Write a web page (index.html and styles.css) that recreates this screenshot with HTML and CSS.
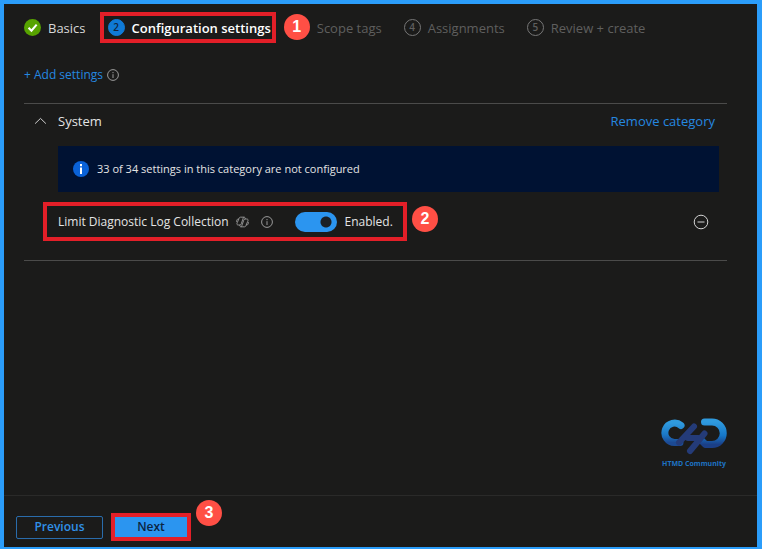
FILE: index.html
```html
<!DOCTYPE html>
<html lang="en">
<head>
<meta charset="utf-8">
<meta name="viewport" content="width=device-width, initial-scale=1">
<title>Create profile - Configuration settings</title>
<link rel="stylesheet" href="styles.css">
</head>
<body>
<div class="blade">
  <ol class="steps">
    <li class="step step-done">
      <svg class="step-icon" viewBox="0 0 18 18" aria-hidden="true"><circle cx="9" cy="9" r="9" fill="#57a300"/><path d="M4.8 9.2 7.9 12.3 13.4 5.9" fill="none" stroke="#fff" stroke-width="2.2"/></svg>
      <span>Basics</span>
    </li>
    <li class="step step-current highlight">
      <span class="step-icon step-number">2</span>
      <span>Configuration settings</span>
    </li>
    <li class="step">
      <span class="step-icon"></span>
      <span>Scope tags</span>
      <b class="callout callout-step">1</b>
    </li>
    <li class="step">
      <span class="step-icon step-number">4</span>
      <span>Assignments</span>
    </li>
    <li class="step">
      <span class="step-icon step-number">5</span>
      <span>Review + create</span>
    </li>
  </ol>

  <main class="content">
    <div class="toolbar">
      <a class="link" href="#">+ Add settings</a>
      <svg class="info-icon" viewBox="0 0 12 12" aria-hidden="true"><circle cx="6" cy="6" r="5.4"/><path d="M6 5.2V9M6 3v1.2"/></svg>
    </div>

    <section class="category">
      <header class="category-header">
        <button class="collapse" type="button" aria-expanded="true" aria-label="Collapse System">
          <svg viewBox="0 0 12 8" aria-hidden="true"><path d="M.6 6.6 6 1.4l5.4 5.2"/></svg>
        </button>
        <h2 class="category-title">System</h2>
        <a class="link" href="#">Remove category</a>
      </header>

      <div class="notice">
        <svg class="notice-icon" viewBox="0 0 16 16" aria-hidden="true"><circle cx="8" cy="8" r="8" fill="#0a62d8"/><path d="M7 6.6h2V13H7zM7 3h2v2.2H7z" fill="#fff"/></svg>
        <p>33 of 34 settings in this category are not configured</p>
      </div>

      <div class="setting-row">
        <div class="setting highlight">
          <label for="limit-log">Limit Diagnostic Log Collection</label>
          <svg class="copilot-icon" viewBox="0 0 14 12" aria-hidden="true"><path d="M4.800.8h3.700c1 0 1.300.6 1.600 2M4.800.8c-1 0-1.400.8-1.700 1.800L1.300 6.800C.6 8.600 1.200 9.200 2.500 9.200h1.800c.8 0 1.100-.5 1.400-1.300l1.700-5C7.800 1.600 8 .8 8.800.8M3.100 2.800h-.6C1.200 2.800.6 4 .6 5.800M9.200 11.200H5.500c-1 0-1.300-.6-1.600-2M9.200 11.200c1 0 1.400-.8 1.700-1.800l1.800-4.200c.7-1.800.1-2.400-1.200-2.400H9.700c-.8 0-1.100.5-1.400 1.300l-1.700 5c-.4 1.300-.6 2.100-1.400 2.100M10.900 9.200h.6c1.300 0 1.900-1.200 1.900-3"/></svg>
          <svg class="info-icon" viewBox="0 0 12 12" aria-hidden="true"><circle cx="6" cy="6" r="5.400"/><path d="M6 5.200V9M6 3v1.200"/></svg>
          <input class="toggle" id="limit-log" type="checkbox" role="switch" checked>
          <span class="toggle-state">Enabled.</span>
          <b class="callout callout-setting">2</b>
        </div>
        <button class="remove" type="button" aria-label="Remove setting">
          <svg viewBox="0 0 16 16" aria-hidden="true"><circle cx="8" cy="8" r="6.800"/><path d="M4.500 8h7"/></svg>
        </button>
      </div>
    </section>

    <figure class="brand">
      <svg class="brand-mark" viewBox="0 0 66 38" aria-hidden="true">
        <defs>
          <linearGradient id="left" x1="0" y1="0" x2="0" y2="1"><stop offset="0" stop-color="#2f9ade"/><stop offset=".6" stop-color="#1b78c6"/><stop offset="1" stop-color="#1c4a94"/></linearGradient>
          <linearGradient id="right" x1="0" y1="0" x2="0" y2="1"><stop offset="0" stop-color="#2f9ade"/><stop offset=".6" stop-color="#1577c8"/><stop offset="1" stop-color="#1b3f86"/></linearGradient>
        </defs>
        <g fill="none" stroke-linecap="round" stroke-linejoin="round" stroke-width="7">
          <path d="M20 8.500A9.700 9.700 0 1 0 13.500 25.500H19" stroke="url(#left)"/>
          <path d="M43.500 5H51a11 11 0 0 1 0 22.500h-6.500L39 22" stroke="url(#right)"/>
          <path d="M18 25.500 33 9.500M29 34 43.500 16.500M27 21h10" stroke="#243b78" stroke-width="6"/>
        </g>
      </svg>
      <figcaption>HTMD Community</figcaption>
    </figure>
  </main>

  <footer class="actions">
    <button class="button" type="button">Previous</button>
    <div class="next highlight">
      <button class="button button-primary" type="button">Next</button>
      <b class="callout callout-next">3</b>
    </div>
  </footer>
</div>
</body>
</html>
```
FILE: styles.css
```css
* {
  box-sizing: border-box;
}

body {
  margin: 0;
  background: #1b1b1a;
  color: #e4e4e4;
  font-family: "Open Sans", "Noto Sans", sans-serif;
  font-size: 12px;
  line-height: 16px;
}

h2, p, figure, ol {
  margin: 0;
  padding: 0;
}

button {
  padding: 0;
  border: 0;
  background: none;
  color: inherit;
  font: inherit;
}

svg {
  display: block;
  flex: none;
}

.blade {
  display: flex;
  flex-direction: column;
  min-height: 100vh;
  border: solid #2b9dfa;
  border-width: 4px 5px 2px 4px;
}

.highlight {
  position: relative;
  border: 4px solid #e31f28;
}

.callout {
  position: absolute;
  width: 26px;
  border-radius: 50%;
  background: #ff4f45;
  color: #fff;
  font: bold 16px/26px "Liberation Sans", sans-serif;
  text-align: center;
}

.link {
  color: #2588e0;
  text-decoration: none;
}

.steps {
  display: flex;
  align-items: center;
  gap: 22px;
  padding: 8px 20px 0;
  list-style: none;
  font-size: 13px;
}

.step {
  position: relative;
  display: flex;
  align-items: center;
  gap: 7px;
  color: #5f5f5e;
  white-space: nowrap;
}

.step-icon {
  width: 17px;
  height: 17px;
}

.step-number {
  border: 1px solid #777;
  border-radius: 50%;
  font-size: 10px;
  font-weight: 600;
  line-height: 15px;
  text-align: center;
}

.step-done {
  color: #d8d8d8;
}

.step-current {
  margin: 0 -5px 0 -8px;
  padding: 4px 1px 4px 4px;
  height: 31px;
  color: #fff;
  font-weight: 600;
}

.step-current .step-number {
  border-color: #0f7ad6;
  background: #0f7ad6;
  color: #10243c;
}

.callout-step {
  top: -5px;
  left: -9px;
}

.content {
  display: flex;
  flex: 1;
  flex-direction: column;
  padding: 24px 30px 25px 20px;
}

.toolbar {
  display: flex;
  align-items: center;
  gap: 4px;
}

.info-icon {
  width: 12px;
  height: 12px;
  fill: none;
  stroke: #9a9a9a;
}

.category {
  margin-top: 20px;
  border: solid #4b4b4a;
  border-width: 1px 0;
}

.category-header {
  display: flex;
  align-items: center;
  padding: 9px 12px 8px 10px;
  font-size: 13px;
}

.category-header .link {
  margin-left: auto;
}

.collapse {
  width: 14px;
  margin-right: 10px;
}

.collapse svg {
  width: 13px;
  height: 8px;
  fill: none;
  stroke: #d0d0d0;
}

.category-title {
  font-size: 13px;
  font-weight: 400;
}

.notice {
  display: flex;
  align-items: center;
  gap: 8px;
  margin: 9px 8px 0 34px;
  padding: 15px;
  background: #001233;
  font-size: 11px;
}

.notice-icon {
  width: 16px;
  height: 16px;
}

.setting-row {
  display: flex;
  align-items: center;
  justify-content: space-between;
  padding: 10px 18px 19px 19px;
}

.setting {
  display: flex;
  align-items: center;
  height: 39px;
  padding: 0 10px 0 11px;
}

.copilot-icon {
  width: 13px;
  height: 12px;
  margin: 0 12px 0 7px;
  fill: none;
  stroke: #9a9a9a;
}

.toggle {
  width: 42px;
  height: 20px;
  margin: 0 8px 0 22px;
  border-radius: 10px;
  background: radial-gradient(circle at 31px 10px, #1b2026 5px, #2b95f0 6px);
  appearance: none;
}

.callout-setting {
  top: 0;
  right: -35px;
}

.remove svg {
  width: 16px;
  height: 16px;
  fill: none;
  stroke: #d4d4d4;
}

.brand {
  width: 66px;
  margin: auto 0 0 auto;
  color: #1e73c4;
  font-size: 7px;
  font-weight: 700;
  line-height: 12px;
  text-align: center;
  white-space: nowrap;
}

.brand-mark {
  width: 66px;
  height: 38px;
  margin-bottom: 3px;
}

.actions {
  display: flex;
  align-items: center;
  gap: 8px;
  padding: 17px 12px 6px;
  border-top: 1px solid #2a2a29;
}

.button {
  width: 87px;
  height: 23px;
  border: 1px solid #2a6cab;
  border-radius: 2px;
  color: #3091e8;
  font-weight: 600;
  line-height: 20px;
}

.button-primary {
  display: block;
  width: 72px;
  height: 20px;
  border: 0;
  border-radius: 0;
  background: #2b95f0;
  color: #0c2542;
}

.callout-next {
  top: -17px;
  right: -35px;
}
```
